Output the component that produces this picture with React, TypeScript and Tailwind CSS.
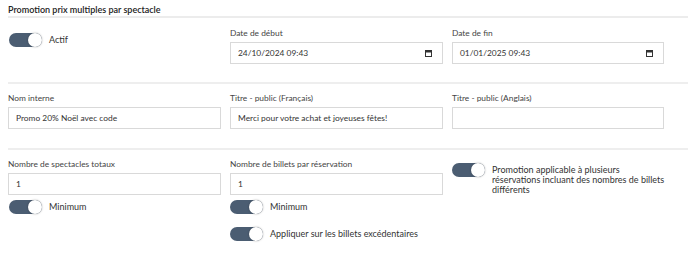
import React from "react";

function Toggle({ label, className = "" }: { label: React.ReactNode; className?: string }) {
  return (
    <div className={`flex items-start gap-[7px] ${className}`}>
      <div className="relative h-[14px] w-[33px] shrink-0 rounded-full bg-[#4b5d72]">
        <div className="absolute right-0 top-0 h-[14px] w-[14px] rounded-full bg-white shadow-[0_0_2px_rgba(0,0,0,0.35)]" />
      </div>
      <span className="mt-[2px] text-[9px] leading-[10px] text-[#333]">{label}</span>
    </div>
  );
}

function Field({ label, value = "", date = false }: { label: string; value?: string; date?: boolean }) {
  return (
    <div>
      <div className="text-[8.4px] leading-[12px] text-[#444]">{label}</div>
      <div className="mt-[3px] flex h-[22px] items-center justify-between border border-[#d9d9d9] bg-white pl-[7px] pr-[10px] text-[8.4px] text-[#333]">
        <span>{value}</span>
        {date && (
          <svg width="7" height="7" viewBox="0 0 7 7">
            <rect x="0.5" y="0.5" width="6" height="6" fill="none" stroke="#333" strokeWidth="1" />
            <rect x="0.5" y="0.5" width="6" height="2" fill="#333" />
          </svg>
        )}
      </div>
    </div>
  );
}

export default function App() {
  return (
    <div className="min-h-screen bg-white pl-2 font-['Lato','Noto_Sans',sans-serif] text-[#333]">
      <div className="border-b-2 border-[#ececec] pt-[3px] text-[9px] font-semibold leading-[13px] text-[#222]">
        Promotion prix multiples par spectacle
      </div>

      <div className="grid grid-cols-[213px_213px_212px] gap-x-[9px] border-b-2 border-[#eeeeee] pt-[9px] pb-[18px]">
        <Toggle label="Actif" className="mt-[6px] pl-px" />
        <Field label="Date de début" value="24/10/2024 09:43" date />
        <Field label="Date de fin" value="01/01/2025 09:43" date />
      </div>

      <div className="grid grid-cols-[213px_213px_212px] gap-x-[9px] border-b-2 border-[#eeeeee] pt-[8px] pb-[19px]">
        <Field label="Nom interne" value="Promo 20% Noël avec code" />
        <Field label="Titre - public (Français)" value="Merci pour votre achat et joyeuses fêtes!" />
        <Field label="Titre - public (Anglais)" />
      </div>

      <div className="grid grid-cols-[213px_213px_212px] gap-x-[9px] pt-[8px]">
        <div>
          <Field label="Nombre de spectacles totaux" value="1" />
          <Toggle label="Minimum" className="mt-[5px] pl-px" />
        </div>
        <div>
          <Field label="Nombre de billets par réservation" value="1" />
          <Toggle label="Minimum" className="mt-[5px]" />
          <Toggle label="Appliquer sur les billets excédentaires" className="mt-[13px]" />
        </div>
        <Toggle
          label="Promotion applicable à plusieurs réservations incluant des nombres de billets différents"
          className="mt-[5px] w-[216px]"
        />
      </div>
    </div>
  );
}
